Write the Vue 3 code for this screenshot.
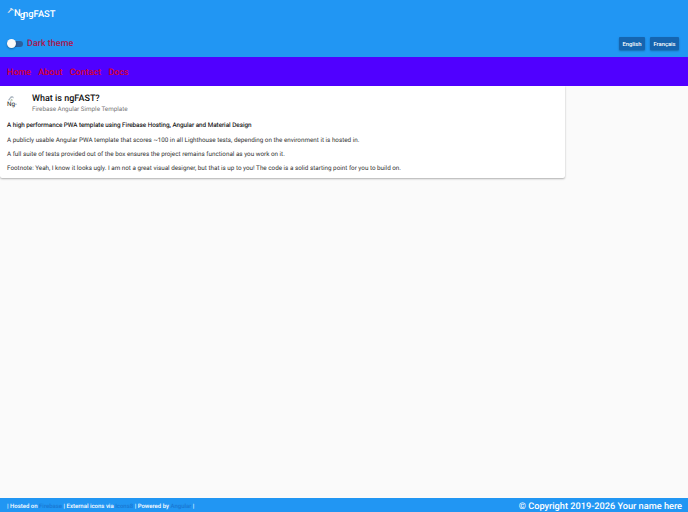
<script setup>
const links = ['Home', 'About', 'Contact', 'Docs']
const paragraphs = [
  'A publicly usable Angular PWA template that scores ~100 in all Lighthouse tests, depending on the environment it is hosted in.',
  'A full suite of tests provided out of the box ensures the project remains functional as you work on it.',
  'Footnote: Yeah, I know it looks ugly. I am not a great visual designer, but that is up to you! The code is a solid starting point for you to build on.'
]
</script>

<template>
  <div class="page">
    <header class="header">
      <div class="brand">
        <span class="logo">
          <svg class="broken" viewBox="0 0 16 16"><path d="M1 13L9 4h4l2 2v3l-3-2-4 2-3 4z" fill="#d5dde6"/><path d="M6 4l3-2h2l1 2z" fill="#eef2f6"/></svg>
          <span class="alt-l">N</span><span class="alt-g">g</span>
        </span>
        <span class="brand-name">ngFAST</span>
      </div>
      <div class="toolbar">
        <div class="toggle">
          <span class="track"><span class="thumb"></span></span>
          <span class="toggle-label">Dark theme</span>
        </div>
        <div class="langs">
          <button class="lang">English</button>
          <button class="lang">Français</button>
        </div>
      </div>
    </header>
    <nav class="nav">
      <a v-for="l in links" :key="l" class="nav-link">{{ l }}</a>
    </nav>
    <main class="main">
      <section class="card">
        <div class="card-head">
          <span class="avatar">
            <svg class="broken" viewBox="0 0 16 16"><path d="M2 14l7-9h4l2 2v3l-3-2-4 2-2 4z" fill="#a9b4bf"/><path d="M7 15l3-3 3 1v2z" fill="#8fa883"/></svg>
            <span class="avatar-alt">Ng-</span>
          </span>
          <div class="titles">
            <div class="title">What is ngFAST?</div>
            <div class="subtitle">Firebase Angular Simple Template</div>
          </div>
        </div>
        <p class="lead">A high performance PWA template using Firebase Hosting, Angular and Material Design</p>
        <p v-for="p in paragraphs" :key="p" class="para">{{ p }}</p>
      </section>
    </main>
    <footer class="footer">
      <div class="credits">
        | Hosted on <a>Firebase</a> | External icons via <a>Icons8</a> | Powered by <a>Angular</a> |
      </div>
      <div class="copyright">© Copyright 2019-2026 Your name here</div>
    </footer>
  </div>
</template>

<style>
html, body { margin: 0; background: #fafafa; }
</style>

<style scoped>
.page {
  height: 512px;
  display: flex;
  flex-direction: column;
  font-family: Roboto, "Liberation Sans", sans-serif;
  background: #fafafa;
  overflow: hidden;
  text-rendering: geometricPrecision;
}
.header {
  height: 57px;
  background: #2196f3;
  color: #fff;
  display: flex;
  flex-direction: column;
  box-sizing: border-box;
  padding: 0 9px 0 7px;
}
.brand {
  height: 27px;
  display: flex;
  align-items: center;
  font-weight: 500;
  font-size: 9.4px;
}
.logo {
  display: inline-flex;
  align-items: flex-start;
  width: 16px;
  height: 14px;
}
.broken { width: 7px; height: 7px; display: block; flex: none; }
.alt-l { font-size: 9.4px; line-height: 12px; margin-top: 1px; }
.alt-g { font-size: 9.4px; line-height: 12px; margin-top: 3px; margin-left: -1px; }
.brand-name { margin-top: 2px; }
.toolbar {
  flex: 1;
  display: flex;
  align-items: center;
  justify-content: space-between;
  padding-top: 3px;
}
.toggle { display: flex; align-items: center; gap: 4px; }
.track {
  width: 16px;
  height: 6px;
  border-radius: 3px;
  background: #2a5f9e;
  display: block;
  position: relative;
}
.thumb {
  position: absolute;
  left: 0;
  top: -1.5px;
  width: 9px;
  height: 9px;
  border-radius: 50%;
  background: #fafafa;
  box-shadow: 0 1px 2px rgba(0,0,0,.3);
}
.toggle-label { color: #a8174f; font-size: 9px; font-weight: 500; }
.langs { display: flex; gap: 5px; }
.lang {
  height: 13px;
  width: 26px;
  padding: 0;
  border: 0;
  border-radius: 1px;
  background: #1565b0;
  color: #fff;
  font: 500 5.85px Roboto, sans-serif;
  box-shadow: 0 1px 2px rgba(0,0,0,.3);
}
.lang:last-child { width: 29px; }
.nav {
  height: 29px;
  background: #5000ff;
  display: flex;
  align-items: center;
  gap: 7.2px;
  padding-left: 7px;
  padding-top: 2px;
  box-sizing: border-box;
}
.nav-link { color: #d5002e; font-size: 9px; font-weight: 500; }
.main { flex: 1; }
.card {
  width: 565px;
  height: 92px;
  box-sizing: border-box;
  background: #fff;
  padding: 7px 7px 0;
  border-radius: 0 0 2px 2px;
  box-shadow: 0 1px 2px rgba(0,0,0,.3);
}
.card-head { display: flex; height: 25px; }
.avatar { width: 25px; display: block; font-size: 6.3px; color: #222; line-height: 7px; padding-top: 1px; }
.avatar-alt { display: block; }
.title { font-size: 9px; font-weight: 500; color: #111; line-height: 12px; }
.subtitle { font-size: 6.3px; color: #777; line-height: 9px; }
.lead { margin: 3px 0 0; font-size: 6.3px; line-height: 9px; font-weight: 400; color: #111; -webkit-text-stroke: 0.1px #111; }
.para { margin: 5px 0 0; font-size: 6.3px; line-height: 9px; color: #333; }
.lead + .para { margin-top: 6px; }
.footer {
  height: 14px;
  background: #2196f3;
  color: #fff;
  display: flex;
  align-items: center;
  justify-content: space-between;
  padding: 3px 6px 0 7px;
  box-sizing: border-box;
}
.credits { font-size: 6px; font-weight: 500; }
.credits a { color: #1976d2; }
.copyright { font-size: 9.2px; font-weight: 500; line-height: 11px; }
</style>
